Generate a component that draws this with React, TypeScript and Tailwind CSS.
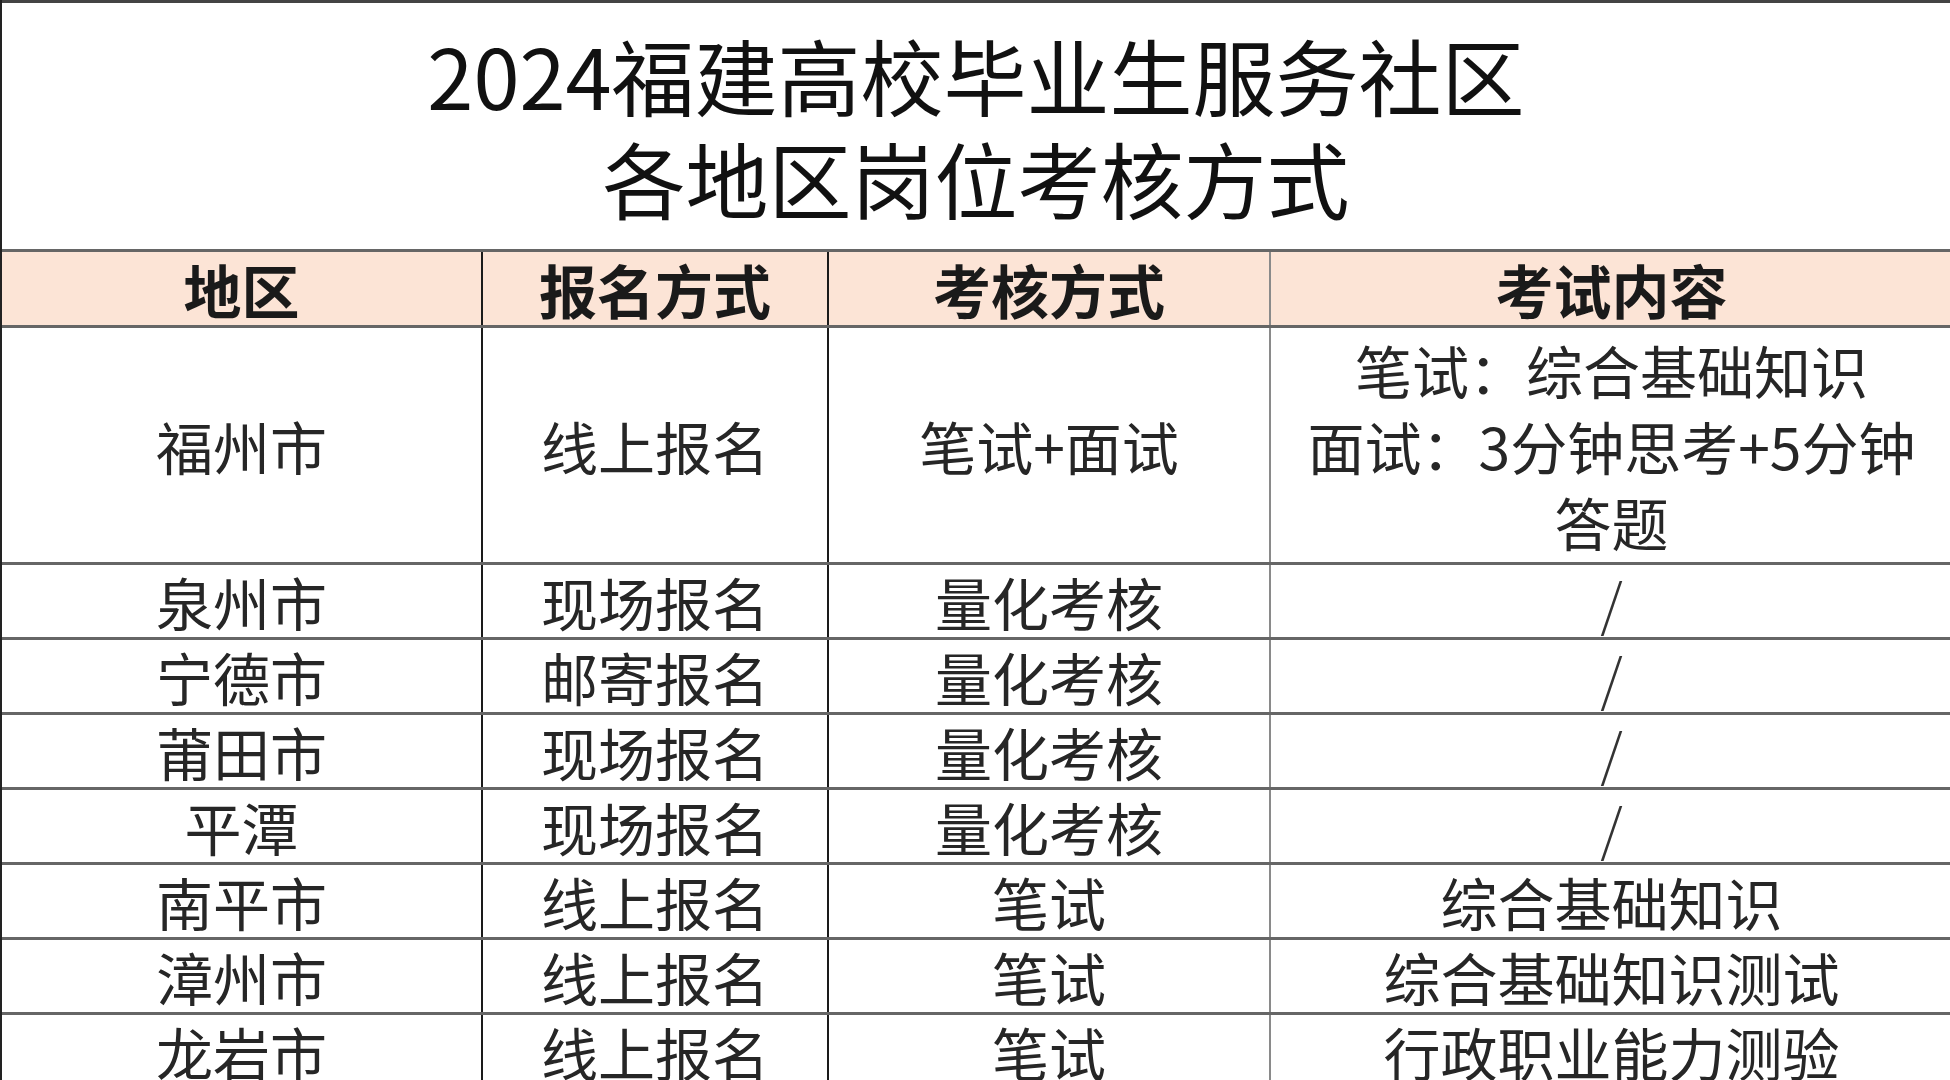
const rows = [
  { area: '福州市', signup: '线上报名', method: '笔试+面试', content: null },
  { area: '泉州市', signup: '现场报名', method: '量化考核', content: '/' },
  { area: '宁德市', signup: '邮寄报名', method: '量化考核', content: '/' },
  { area: '莆田市', signup: '现场报名', method: '量化考核', content: '/' },
  { area: '平潭', signup: '现场报名', method: '量化考核', content: '/' },
  { area: '南平市', signup: '线上报名', method: '笔试', content: '综合基础知识' },
  { area: '漳州市', signup: '线上报名', method: '笔试', content: '综合基础知识测试' },
  { area: '龙岩市', signup: '线上报名', method: '笔试', content: '行政职业能力测验' },
]

const grid = 'grid grid-cols-[481px_346px_442px_681px] border-t-[3px] border-[#666]'
const cell = 'flex items-center justify-center border-r-2 border-[#1a1a1a]'
const lastSep = 'flex items-center justify-center border-r-2 border-[#8a8a8a]'
const plain = 'flex items-center justify-center text-center'

export default function App() {
  return (
    <div
      className="w-[1950px] h-[1080px] overflow-hidden bg-white border-l-2 border-[#222] text-[#262626]"
      style={{ fontFamily: '"Noto Sans CJK SC", "Noto Sans", sans-serif' }}
    >
      <div className="h-[249px] border-t-[3px] border-[#444] pt-[20px] text-center text-[83px] leading-[103px] text-[#111]">
        <div>2024福建高校毕业生服务社区</div>
        <div>各地区岗位考核方式</div>
      </div>

      <div className={`${grid} h-[76px] bg-[#fce4d6] text-[58px] leading-[64px] font-bold text-[#1a1a1a]`}>
        <div className={cell}>地区</div>
        <div className={cell}>报名方式</div>
        <div className={lastSep}>考核方式</div>
        <div className={plain}>考试内容</div>
      </div>

      {rows.map((r, i) => (
        <div
          key={r.area}
          className={`${grid} ${i === 0 ? 'h-[237px]' : 'h-[75px]'} text-[57px] leading-[64px]`}
        >
          <div className={cell}>{r.area}</div>
          <div className={cell}>{r.signup}</div>
          <div className={lastSep}>{r.method}</div>
          <div className={plain}>
            {r.content === null ? (
              <div className="leading-[76px]">
                笔试：综合基础知识
                <br />
                面试：3分钟思考+5分钟
                <br />
                答题
              </div>
            ) : r.content === '/' ? (
              <span className="font-light text-[#333]">/</span>
            ) : (
              r.content
            )}
          </div>
        </div>
      ))}
    </div>
  )
}
